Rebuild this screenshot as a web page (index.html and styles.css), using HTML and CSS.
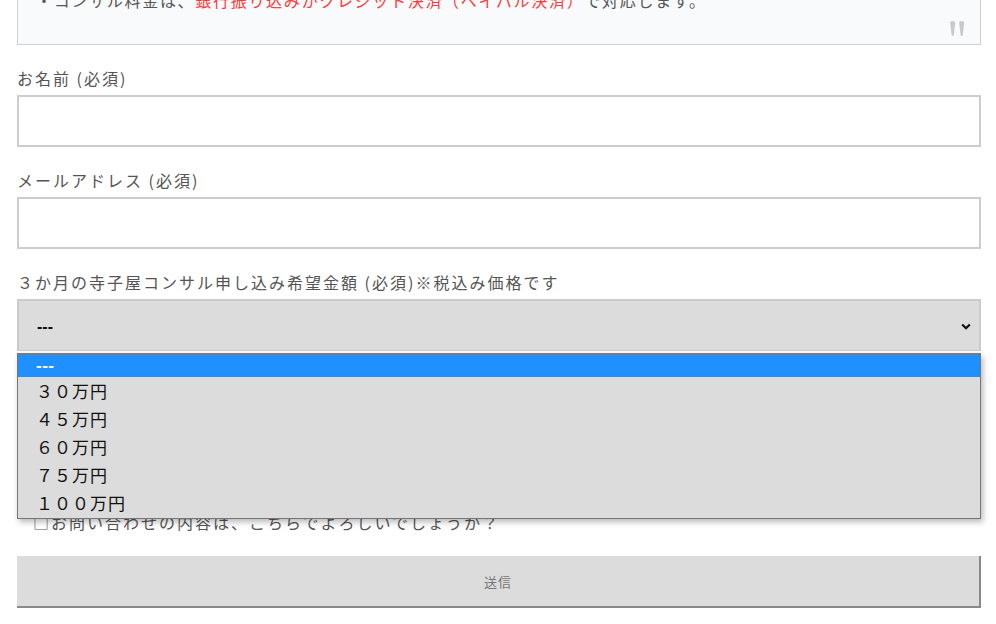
FILE: index.html
```html
<!DOCTYPE html>
<html lang="ja">
<head>
<meta charset="utf-8">
<link rel="stylesheet" href="styles.css">
</head>
<body>
<div class="page">
  <blockquote class="note">
    <p class="note-text">・コンサル料金は、<span class="red">銀行振り込みかクレジット決済（ペイパル決済）</span>で対応します。</p>
    <svg class="quote" width="16" height="16" viewBox="0 0 16 16"><path d="M0.2 1.8 Q0.2 0 2.7 0 Q5.2 0 5.2 1.8 L3.8 13.8 Q3.6 15 2.7 15 Q1.8 15 1.6 13.8 Z" fill="#c9c9c9"/><path d="M9.2 1.8 Q9.2 0 11.7 0 Q14.2 0 14.2 1.8 L12.8 13.8 Q12.6 15 11.7 15 Q10.8 15 10.6 13.8 Z" fill="#c9c9c9"/></svg>
  </blockquote>

  <div class="field">
    <label class="label">お名前 (必須)</label>
    <div class="input"></div>
  </div>

  <div class="field">
    <label class="label">メールアドレス (必須)</label>
    <div class="input"></div>
  </div>

  <div class="field">
    <label class="label label-wide">３か月の寺子屋コンサル申し込み希望金額 (必須)※税込み価格です</label>
    <div class="select-wrap">
      <div class="select">
        <span class="select-value">---</span>
        <svg class="chevron" width="10" height="7" viewBox="0 0 10 7"><polyline points="1.2,1.5 5,5.2 8.8,1.5" fill="none" stroke="#111" stroke-width="2.2"/></svg>
      </div>
      <div class="dropdown">
        <div class="opt opt-first selected">---</div>
        <div class="opt">３０万円</div>
        <div class="opt">４５万円</div>
        <div class="opt">６０万円</div>
        <div class="opt">７５万円</div>
        <div class="opt">１００万円</div>
      </div>
    </div>
  </div>

  <p class="confirm">□お問い合わせの内容は、こちらでよろしいでしょうか？</p>

  <div class="submit">送信</div>
</div>
</body>
</html>
```

FILE: styles.css
```css
html, body {
  margin: 0;
  padding: 0;
  background: #fff;
}
body {
  font-family: "Noto Sans CJK JP", "Noto Sans", sans-serif;
  color: #555;
  font-size: 16px;
  overflow: hidden;
}
.page {
  width: 964px;
  margin: 0 15px 0 17px;
}
.note {
  position: relative;
  margin: -14px 0 0 0;
  background: #f9fafc;
  border: 1px solid #d0d0d0;
  border-top: none;
  padding: 0 0 30px 18px;
}
.note-text {
  margin: 0;
  line-height: 28px;
  letter-spacing: 1.7px;
  color: #555;
}
.red {
  color: #ff3b3b;
}
.quote {
  position: absolute;
  right: 14px;
  bottom: 7px;
}
.field {
  margin-top: 21px;
}
.label {
  display: block;
  line-height: 24px;
  margin-bottom: 5px;
  letter-spacing: 2px;
  color: #555;
}
.input {
  height: 48px;
  border: 2px solid #cdcdcd;
  background: #fff;
}
.select-wrap {
  position: relative;
}
.select {
  height: 49px;
  border: 2px solid #cbcbcb;
  border-bottom-width: 1px;
  background: #dcdcdc;
  display: flex;
  align-items: center;
  justify-content: space-between;
  padding: 0 8px 0 18px;
}
.select-value {
  font-family: "Liberation Sans", Arial, sans-serif;
  font-weight: 700;
  font-size: 16px;
  color: #111;
  margin-top: 2px;
}
.chevron {
  margin-top: 1px;
}
.dropdown {
  position: absolute;
  left: 0;
  right: 0;
  top: 54px;
  background: #dcdcdc;
  border: 1px solid #767676;
  border-top: 2px solid #7a7a7a;
  padding-bottom: 1px;
  box-shadow: 2px 3px 6px rgba(0, 0, 0, 0.28);
  z-index: 5;
}
.opt {
  height: 28px;
  line-height: 28px;
  padding-left: 18px;
  font-size: 17px;
  letter-spacing: 1px;
  color: #111;
}
.opt-first {
  height: 22px;
  line-height: 22px;
  font-family: "Liberation Sans", Arial, sans-serif;
  font-size: 17px;
  font-weight: 700;
  letter-spacing: 0.5px;
}
.selected {
  background: #1e90ff;
  color: #fff;
}
.confirm {
  margin: 159px 0 0 0;
  padding-left: 16px;
  line-height: 24px;
  letter-spacing: 2px;
  color: #555;
}
.submit {
  margin-top: 22px;
  height: 50px;
  background: #dcdcdc;
  border-right: 2px solid #8a8a8a;
  border-bottom: 2px solid #8a8a8a;
  display: flex;
  align-items: center;
  justify-content: center;
  font-size: 13px;
  color: #777;
  letter-spacing: 1px;
}
```
